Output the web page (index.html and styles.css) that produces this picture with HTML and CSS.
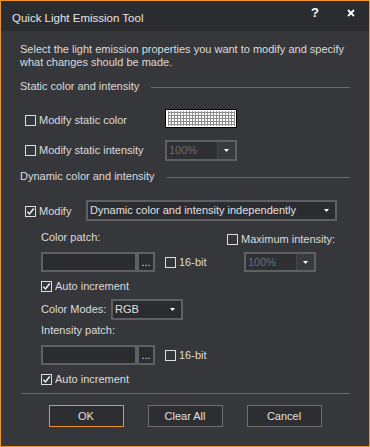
FILE: index.html
```html
<!DOCTYPE html>
<html>
<head>
<meta charset="utf-8">
<link rel="stylesheet" href="styles.css">
</head>
<body>
<div class="window">
  <div class="titlebar">
    <span class="title">Quick Light Emission Tool</span>
    <span class="tb-btn help">?</span>
    <span class="tb-btn close"><svg width="8" height="8" viewBox="0 0 8 8"><path d="M1 1 L7 7 M7 1 L1 7" stroke="#ffffff" stroke-width="1.8" fill="none"/></svg></span>
  </div>
  <div class="content">
    <p class="desc">Select the light emission properties you want to modify and specify<br>what changes should be made.</p>

    <div class="group-head"><span>Static color and intensity</span><span class="rule"></span></div>

    <div class="row row-static">
      <div class="label-col lc-static"><label class="check"><span class="box"></span>Modify static color</label></div>
      <div class="swatch"><div class="swatch-grid"></div></div>
    </div>

    <div class="row row-static2">
      <div class="label-col lc-static lc-down"><label class="check"><span class="box"></span>Modify static intensity</label></div>
      <div class="combo combo-small disabled"><span class="val">100%</span><span class="arrow"><svg width="5" height="3" viewBox="0 0 5 3"><path d="M0 0 H5 L2.5 3 Z" fill="#ffffff"/></svg></span></div>
    </div>

    <div class="group-head gh-dyn"><span>Dynamic color and intensity</span><span class="rule"></span></div>

    <div class="row row-modify">
      <div class="label-col lc-modify"><label class="check"><span class="box checked"><svg width="9" height="9" viewBox="0 0 9 9"><path d="M1.3 4.6 L3.5 7 L7.7 1.5" stroke="#ffffff" stroke-width="1.3" fill="none"/></svg></span>Modify</label></div>
      <div class="combo combo-wide"><span class="val">Dynamic color and intensity independently</span><span class="arrow"><svg width="5" height="3" viewBox="0 0 5 3"><path d="M0 0 H5 L2.5 3 Z" fill="#ffffff"/></svg></span></div>
    </div>

    <div class="sub">
      <div class="patch-area">
        <div class="patch-left">
          <div class="text-label">Color patch:</div>
          <div class="input-row">
            <div class="textbox"></div>
            <div class="browse">...</div>
            <label class="check bit"><span class="box"></span>16-bit</label>
          </div>
        </div>
        <div class="patch-right">
          <label class="check"><span class="box"></span>Maximum intensity:</label>
          <div class="combo combo-small combo-max disabled"><span class="val">100%</span><span class="arrow"><svg width="5" height="3" viewBox="0 0 5 3"><path d="M0 0 H5 L2.5 3 Z" fill="#ffffff"/></svg></span></div>
        </div>
      </div>

      <label class="check auto"><span class="box checked"><svg width="9" height="9" viewBox="0 0 9 9"><path d="M1.3 4.6 L3.5 7 L7.7 1.5" stroke="#ffffff" stroke-width="1.3" fill="none"/></svg></span>Auto increment</label>

      <div class="modes-row">
        <span class="modes-label">Color Modes:</span>
        <div class="combo combo-rgb"><span class="val">RGB</span><span class="arrow"><svg width="5" height="3" viewBox="0 0 5 3"><path d="M0 0 H5 L2.5 3 Z" fill="#ffffff"/></svg></span></div>
      </div>

      <div class="text-label int-label">Intensity patch:</div>
      <div class="input-row">
        <div class="textbox"></div>
        <div class="browse">...</div>
        <label class="check bit"><span class="box"></span>16-bit</label>
      </div>

      <label class="check auto"><span class="box checked"><svg width="9" height="9" viewBox="0 0 9 9"><path d="M1.3 4.6 L3.5 7 L7.7 1.5" stroke="#ffffff" stroke-width="1.3" fill="none"/></svg></span>Auto increment</label>
    </div>

    <div class="separator"></div>

    <div class="buttons">
      <button class="btn default">OK</button>
      <button class="btn">Clear All</button>
      <button class="btn">Cancel</button>
    </div>
  </div>
</div>
</body>
</html>
```

FILE: styles.css
```css
html, body {
  margin: 0;
  padding: 0;
  background: #36373b;
}

body {
  font-family: "Liberation Sans", Arial, sans-serif;
  font-size: 11px;
  color: #dcdcdc;
}

.window {
  width: 370px;
  height: 447px;
  box-sizing: border-box;
  border: 1px solid #f39322;
  background: #36373b;
  display: flex;
  flex-direction: column;
}

.titlebar {
  flex: none;
  height: 30px;
  background: #2b2c30;
  display: flex;
  align-items: flex-start;
}

.title {
  flex: 1;
  padding: 11px 0 0 11px;
  line-height: 13px;
  font-size: 11.5px;
  color: #e6e6e6;
}

.tb-btn {
  width: 36px;
  display: flex;
  justify-content: center;
}

.help {
  padding-top: 5px;
  font-weight: bold;
  font-size: 13px;
  line-height: 13px;
  color: #ffffff;
}

.close {
  padding-top: 8px;
}

.close svg {
  display: block;
}

.content {
  flex: 1;
  padding: 12px 19px 0 19px;
}

.desc {
  margin: 0;
  line-height: 13px;
}

.group-head {
  display: flex;
  align-items: center;
  margin-top: 11px;
  line-height: 13px;
}

.gh-dyn {
  margin-top: 9px;
}

.rule {
  flex: 1;
  height: 1px;
  background: #6a6b6f;
  margin-left: 12px;
  margin-top: 1px;
}

.row {
  display: flex;
  align-items: flex-start;
  padding-left: 5px;
}

.row-static {
  margin-top: 16px;
}

.row-static2 {
  margin-top: 12px;
}

.row-modify {
  margin-top: 17px;
}

.label-col {
  margin-top: 5px;
}

.lc-static {
  width: 140px;
}

.lc-down {
  margin-top: 4px;
}

.lc-modify {
  width: 61px;
}

.check {
  display: flex;
  align-items: center;
  gap: 3px;
  line-height: 13px;
  white-space: nowrap;
}

.box {
  flex: none;
  width: 11px;
  height: 11px;
  box-sizing: border-box;
  border: 1px solid #dedede;
  display: flex;
  align-items: center;
  justify-content: center;
}

.box svg {
  display: block;
}

.swatch {
  width: 72px;
  height: 19px;
  box-sizing: border-box;
  border: 1px solid #000000;
  background: #ffffff;
  padding: 1px 1px 1px 2px;
}

.swatch-grid {
  height: 100%;
  background:
    linear-gradient(90deg, #8c8c8c 1px, transparent 1px) 0 0 / 3px 3px,
    linear-gradient(180deg, #8c8c8c 1px, transparent 1px) 0 1px / 3px 3px,
    #ffffff;
}

.combo {
  height: 21px;
  box-sizing: border-box;
  border: 2px solid #5f6064;
  background: #2b2c30;
  display: flex;
  align-items: stretch;
  color: #e0e0e0;
  line-height: 13px;
}

.combo .val {
  flex: 1;
  padding-left: 2px;
  display: flex;
  align-items: center;
  white-space: nowrap;
  overflow: hidden;
}

.combo .arrow {
  width: 18px;
  display: flex;
  align-items: center;
  justify-content: center;
}

.combo .arrow svg {
  display: block;
}

.combo.disabled {
  color: #6b6c70;
  background: #2f3034;
}

.combo.disabled .arrow {
  border-left: 1px solid #45464a;
  background: #393a3e;
  width: 17px;
}

.combo-small {
  width: 72px;
}

.combo-wide {
  width: 251px;
}

.combo-rgb {
  width: 72px;
}

.sub {
  padding-left: 21px;
}

.patch-area {
  display: flex;
  align-items: flex-start;
  margin-top: 10px;
}

.patch-left {
  width: 186px;
}

.text-label {
  line-height: 13px;
}

.input-row {
  display: flex;
  align-items: center;
  margin-top: 8px;
}

.textbox {
  width: 96px;
  height: 20px;
  box-sizing: border-box;
  border: 2px solid #5f6064;
  background: #2b2c30;
}

.browse {
  width: 18px;
  height: 20px;
  box-sizing: border-box;
  border: 2px solid #5f6064;
  background: #2b2c30;
  color: #e0e0e0;
  font-size: 11px;
  line-height: 11px;
  display: flex;
  align-items: flex-end;
  justify-content: center;
  padding-bottom: 2px;
}

.bit {
  margin-left: 10px;
}

.patch-right {
  padding-top: 2px;
}

.combo-max {
  margin-top: 6px;
  margin-left: 17px;
  height: 20px;
}

.auto {
  margin-top: 8px;
}

.modes-row {
  display: flex;
  align-items: center;
  margin-top: 6px;
}

.modes-label {
  width: 70px;
  line-height: 13px;
  white-space: nowrap;
}

.int-label {
  margin-top: 4px;
}

.separator {
  margin-top: 7px;
  margin-left: 1px;
  height: 1px;
  background: #6a6b6f;
}

.buttons {
  display: flex;
  justify-content: center;
  gap: 24px;
  margin-top: 11px;
}

.btn {
  width: 75px;
  height: 22px;
  box-sizing: border-box;
  border: 1px solid #6e6f73;
  background: #2d2e32;
  color: #e0e0e0;
  font-family: "Liberation Sans", Arial, sans-serif;
  font-size: 11px;
  padding: 0;
  margin: 0;
}

.btn.default {
  border-color: #f39322;
}
```
